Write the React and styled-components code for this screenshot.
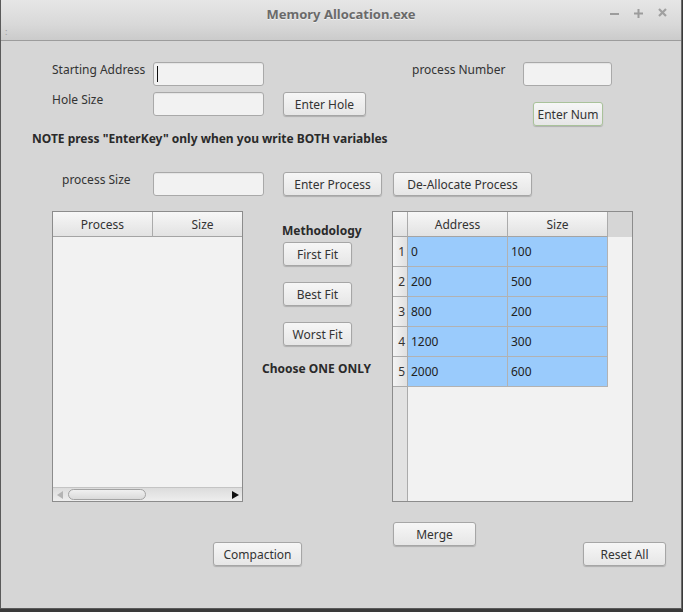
import React from 'react';
import styled, { createGlobalStyle } from 'styled-components';

const GlobalStyle = createGlobalStyle`
  html, body {
    margin: 0;
    padding: 0;
    background: #3a3a3a;
  }
  body {
    font-family: "Noto Sans", "Open Sans", sans-serif;
    font-size: 12px;
    color: #303030;
  }
  * {
    box-sizing: border-box;
  }
`;

const Window = styled.div`
  width: 682px;
  height: 609px;
  background: #d6d6d6;
  border-left: 1px solid #5a5a5a;
  border-right: 1px solid #6a6a6a;
  border-bottom: 1px solid #5a5a5a;
  display: flex;
  flex-direction: column;
`;

const TitleBar = styled.div`
  height: 41px;
  flex-shrink: 0;
  background: linear-gradient(#e6e6e6, #d9d9d9 60%, #cbcbcb);
  border-bottom: 1px solid #9c9c9c;
  display: flex;
  flex-direction: column;
`;

const TitleRow = styled.div`
  height: 27px;
  display: grid;
  grid-template-columns: 1fr auto 1fr;
  align-items: center;
`;

const Title = styled.div`
  grid-column: 2;
  font-size: 13px;
  font-weight: 700;
  color: #6a6a6a;
  text-shadow: 0 1px 0 rgba(255, 255, 255, 0.6);
`;

const Controls = styled.div`
  grid-column: 3;
  justify-self: end;
  display: flex;
  align-items: center;
  gap: 15px;
  padding-right: 14px;
`;

const MenuRow = styled.div`
  flex: 1;
  padding-left: 4px;
  font-size: 9px;
  line-height: 9px;
  color: #9a9a9a;
`;

const Body = styled.div`
  flex: 1;
  display: flex;
  flex-direction: column;
  padding-top: 21px;
`;

const Row = styled.div`
  display: flex;
  align-items: flex-start;
  margin-top: ${p => p.top || 0}px;
  margin-left: ${p => p.left || 0}px;
`;

const Column = styled.div`
  display: flex;
  flex-direction: column;
  gap: ${p => p.gap || 0}px;
  margin-left: ${p => p.left || 0}px;
`;

const Label = styled.div`
  width: ${p => p.w}px;
  line-height: 16px;
  color: #333;
`;

const Input = styled.div`
  width: ${p => p.w}px;
  height: 24px;
  background: #f2f2f2;
  border: 1px solid #a9a9a9;
  border-radius: 3px;
  box-shadow: inset 0 1px 1px rgba(0, 0, 0, 0.06);
  position: relative;
`;

const Caret = styled.span`
  position: absolute;
  left: 3px;
  top: 3px;
  width: 1px;
  height: 16px;
  background: #111;
`;

const Button = styled.button`
  width: ${p => p.w}px;
  height: 24px;
  margin-left: ${p => p.left || 0}px;
  margin-top: ${p => p.top || 0}px;
  padding: 0;
  font-family: inherit;
  font-size: 12px;
  color: #333;
  background: linear-gradient(#f6f6f6, #e6e6e6);
  border: 1px solid ${p => (p.focus ? '#a9c29a' : '#a6a6a6')};
  border-radius: 3px;
  box-shadow: 0 1px 1px rgba(0, 0, 0, 0.18);
  flex-shrink: 0;
`;

const Bold = styled.div`
  font-weight: 700;
  line-height: 16px;
  color: #2a2a2a;
  margin-left: ${p => p.left || 0}px;
  margin-top: ${p => p.top || 0}px;
`;

const TableBox = styled.div`
  width: ${p => p.w}px;
  height: 291px;
  margin-left: ${p => p.left || 0}px;
  border: 1px solid #8c8c8c;
  background: #f2f2f2;
  display: flex;
  flex-direction: column;
  flex-shrink: 0;
  overflow: hidden;
`;

const HeaderRow = styled.div`
  display: flex;
  height: 25px;
  background: #d6d6d6;
`;

const HeaderCell = styled.div`
  width: ${p => p.w}px;
  flex-shrink: 0;
  height: 25px;
  display: flex;
  align-items: center;
  justify-content: center;
  background: linear-gradient(#f7f7f7, #e2e2e2);
  border-right: 1px solid #ababab;
  border-bottom: 1px solid #a4a4a4;
  color: #333;
`;

const TableBody = styled.div`
  flex: 1;
  display: flex;
`;

const VHeader = styled.div`
  width: 15px;
  background: #e2e2e2;
  border-right: 1px solid #ababab;
  display: flex;
  flex-direction: column;
`;

const VCell = styled.div`
  height: 30px;
  display: flex;
  align-items: center;
  justify-content: flex-end;
  padding-right: 2px;
  background: linear-gradient(90deg, #f4f4f4, #e0e0e0);
  border-bottom: 1px solid #ababab;
  color: #333;
`;

const Grid = styled.div`
  display: grid;
  grid-template-columns: 100px 100px;
  grid-auto-rows: 30px;
  align-content: start;
`;

const Cell = styled.div`
  background: #9acbfc;
  border-right: 1px solid #b2b2b2;
  border-bottom: 1px solid #b2b2b2;
  padding-left: 3px;
  display: flex;
  align-items: center;
  color: #222;
`;

const Empty = styled.div`
  flex: 1;
`;

const ScrollBar = styled.div`
  height: 14px;
  flex-shrink: 0;
  display: flex;
  align-items: center;
  background: linear-gradient(#dcdcdc, #eeeeee);
  border-top: 1px solid #c4c4c4;
`;

const Arrow = styled.div`
  width: 14px;
  display: flex;
  align-items: center;
  justify-content: center;
`;

const Track = styled.div`
  flex: 1;
  height: 100%;
  display: flex;
  align-items: center;
  padding-left: 1px;
`;

const Handle = styled.div`
  width: 78px;
  height: 11px;
  border: 1px solid #a3a3a3;
  border-radius: 6px;
  background: linear-gradient(#f0f0f0, #dadada);
`;

const MiddleColumn = styled.div`
  width: 149px;
  display: flex;
  flex-direction: column;
  align-items: flex-start;
`;

const holes = [
  ['0', '100'],
  ['200', '500'],
  ['800', '200'],
  ['1200', '300'],
  ['2000', '600'],
];

const App = () => (
  <>
    <GlobalStyle />
    <Window>
      <TitleBar>
        <TitleRow>
          <Title>Memory Allocation.exe</Title>
          <Controls>
            <svg width="9" height="9" viewBox="0 0 9 9">
              <rect x="0" y="4" width="9" height="2" fill="#9c9c9c" />
            </svg>
            <svg width="9" height="9" viewBox="0 0 9 9">
              <rect x="0" y="3.5" width="9" height="2" fill="#9c9c9c" />
              <rect x="3.5" y="0" width="2" height="9" fill="#9c9c9c" />
            </svg>
            <svg width="9" height="9" viewBox="0 0 9 9" style={{ marginTop: -3 }}>
              <path d="M1 1 L8 8 M8 1 L1 8" stroke="#a0a0a0" strokeWidth="2.2" />
            </svg>
          </Controls>
        </TitleRow>
        <MenuRow>:</MenuRow>
      </TitleBar>

      <Body>
        <Row>
          <Column left={51} gap={6}>
            <Row>
              <Label w={101}>Starting Address</Label>
              <Input w={111}><Caret /></Input>
            </Row>
            <Row>
              <Label w={101}>Hole Size</Label>
              <Input w={111} />
              <Button w={83} left={19}>Enter Hole</Button>
            </Row>
          </Column>
          <Column left={46}>
            <Row>
              <Label w={111}>process Number</Label>
              <Input w={89} />
            </Row>
            <Button w={70} left={121} top={16} focus>Enter Num</Button>
          </Column>
        </Row>

        <Bold left={31} top={5}>NOTE press "EnterKey" only when you write BOTH variables</Bold>

        <Row top={25} left={61}>
          <Label w={91}>process Size</Label>
          <Input w={111} />
          <Button w={99} left={19}>Enter Process</Button>
          <Button w={139} left={11}>De-Allocate Process</Button>
        </Row>

        <Row top={15}>
          <TableBox w={191} left={51}>
            <HeaderRow>
              <HeaderCell w={100}>Process</HeaderCell>
              <HeaderCell w={100}>Size</HeaderCell>
            </HeaderRow>
            <Empty />
            <ScrollBar>
              <Arrow>
                <svg width="6" height="8" viewBox="0 0 6 8">
                  <path d="M6 0 L0 4 L6 8 Z" fill="#b4b4b4" />
                </svg>
              </Arrow>
              <Track>
                <Handle />
              </Track>
              <Arrow>
                <svg width="7" height="8" viewBox="0 0 7 8">
                  <path d="M0 0 L7 4 L0 8 Z" fill="#111" />
                </svg>
              </Arrow>
            </ScrollBar>
          </TableBox>

          <MiddleColumn>
            <Bold left={39} top={12}>Methodology</Bold>
            <Button w={69} left={40} top={3}>First Fit</Button>
            <Button w={69} left={40} top={16}>Best Fit</Button>
            <Button w={69} left={40} top={16}>Worst Fit</Button>
            <Bold left={19} top={15}>Choose ONE ONLY</Bold>
          </MiddleColumn>

          <TableBox w={241}>
            <HeaderRow>
              <HeaderCell w={15} />
              <HeaderCell w={100}>Address</HeaderCell>
              <HeaderCell w={100}>Size</HeaderCell>
            </HeaderRow>
            <TableBody>
              <VHeader>
                {holes.map((h, i) => (
                  <VCell key={i}>{i + 1}</VCell>
                ))}
              </VHeader>
              <Grid>
                {holes.map((h, i) => (
                  <React.Fragment key={i}>
                    <Cell>{h[0]}</Cell>
                    <Cell>{h[1]}</Cell>
                  </React.Fragment>
                ))}
              </Grid>
            </TableBody>
          </TableBox>
        </Row>

        <Row top={20}>
          <Button w={89} left={212} top={20}>Compaction</Button>
          <Button w={83} left={91}>Merge</Button>
          <Button w={83} left={107} top={20}>Reset All</Button>
        </Row>
      </Body>
    </Window>
  </>
);

export default App;
